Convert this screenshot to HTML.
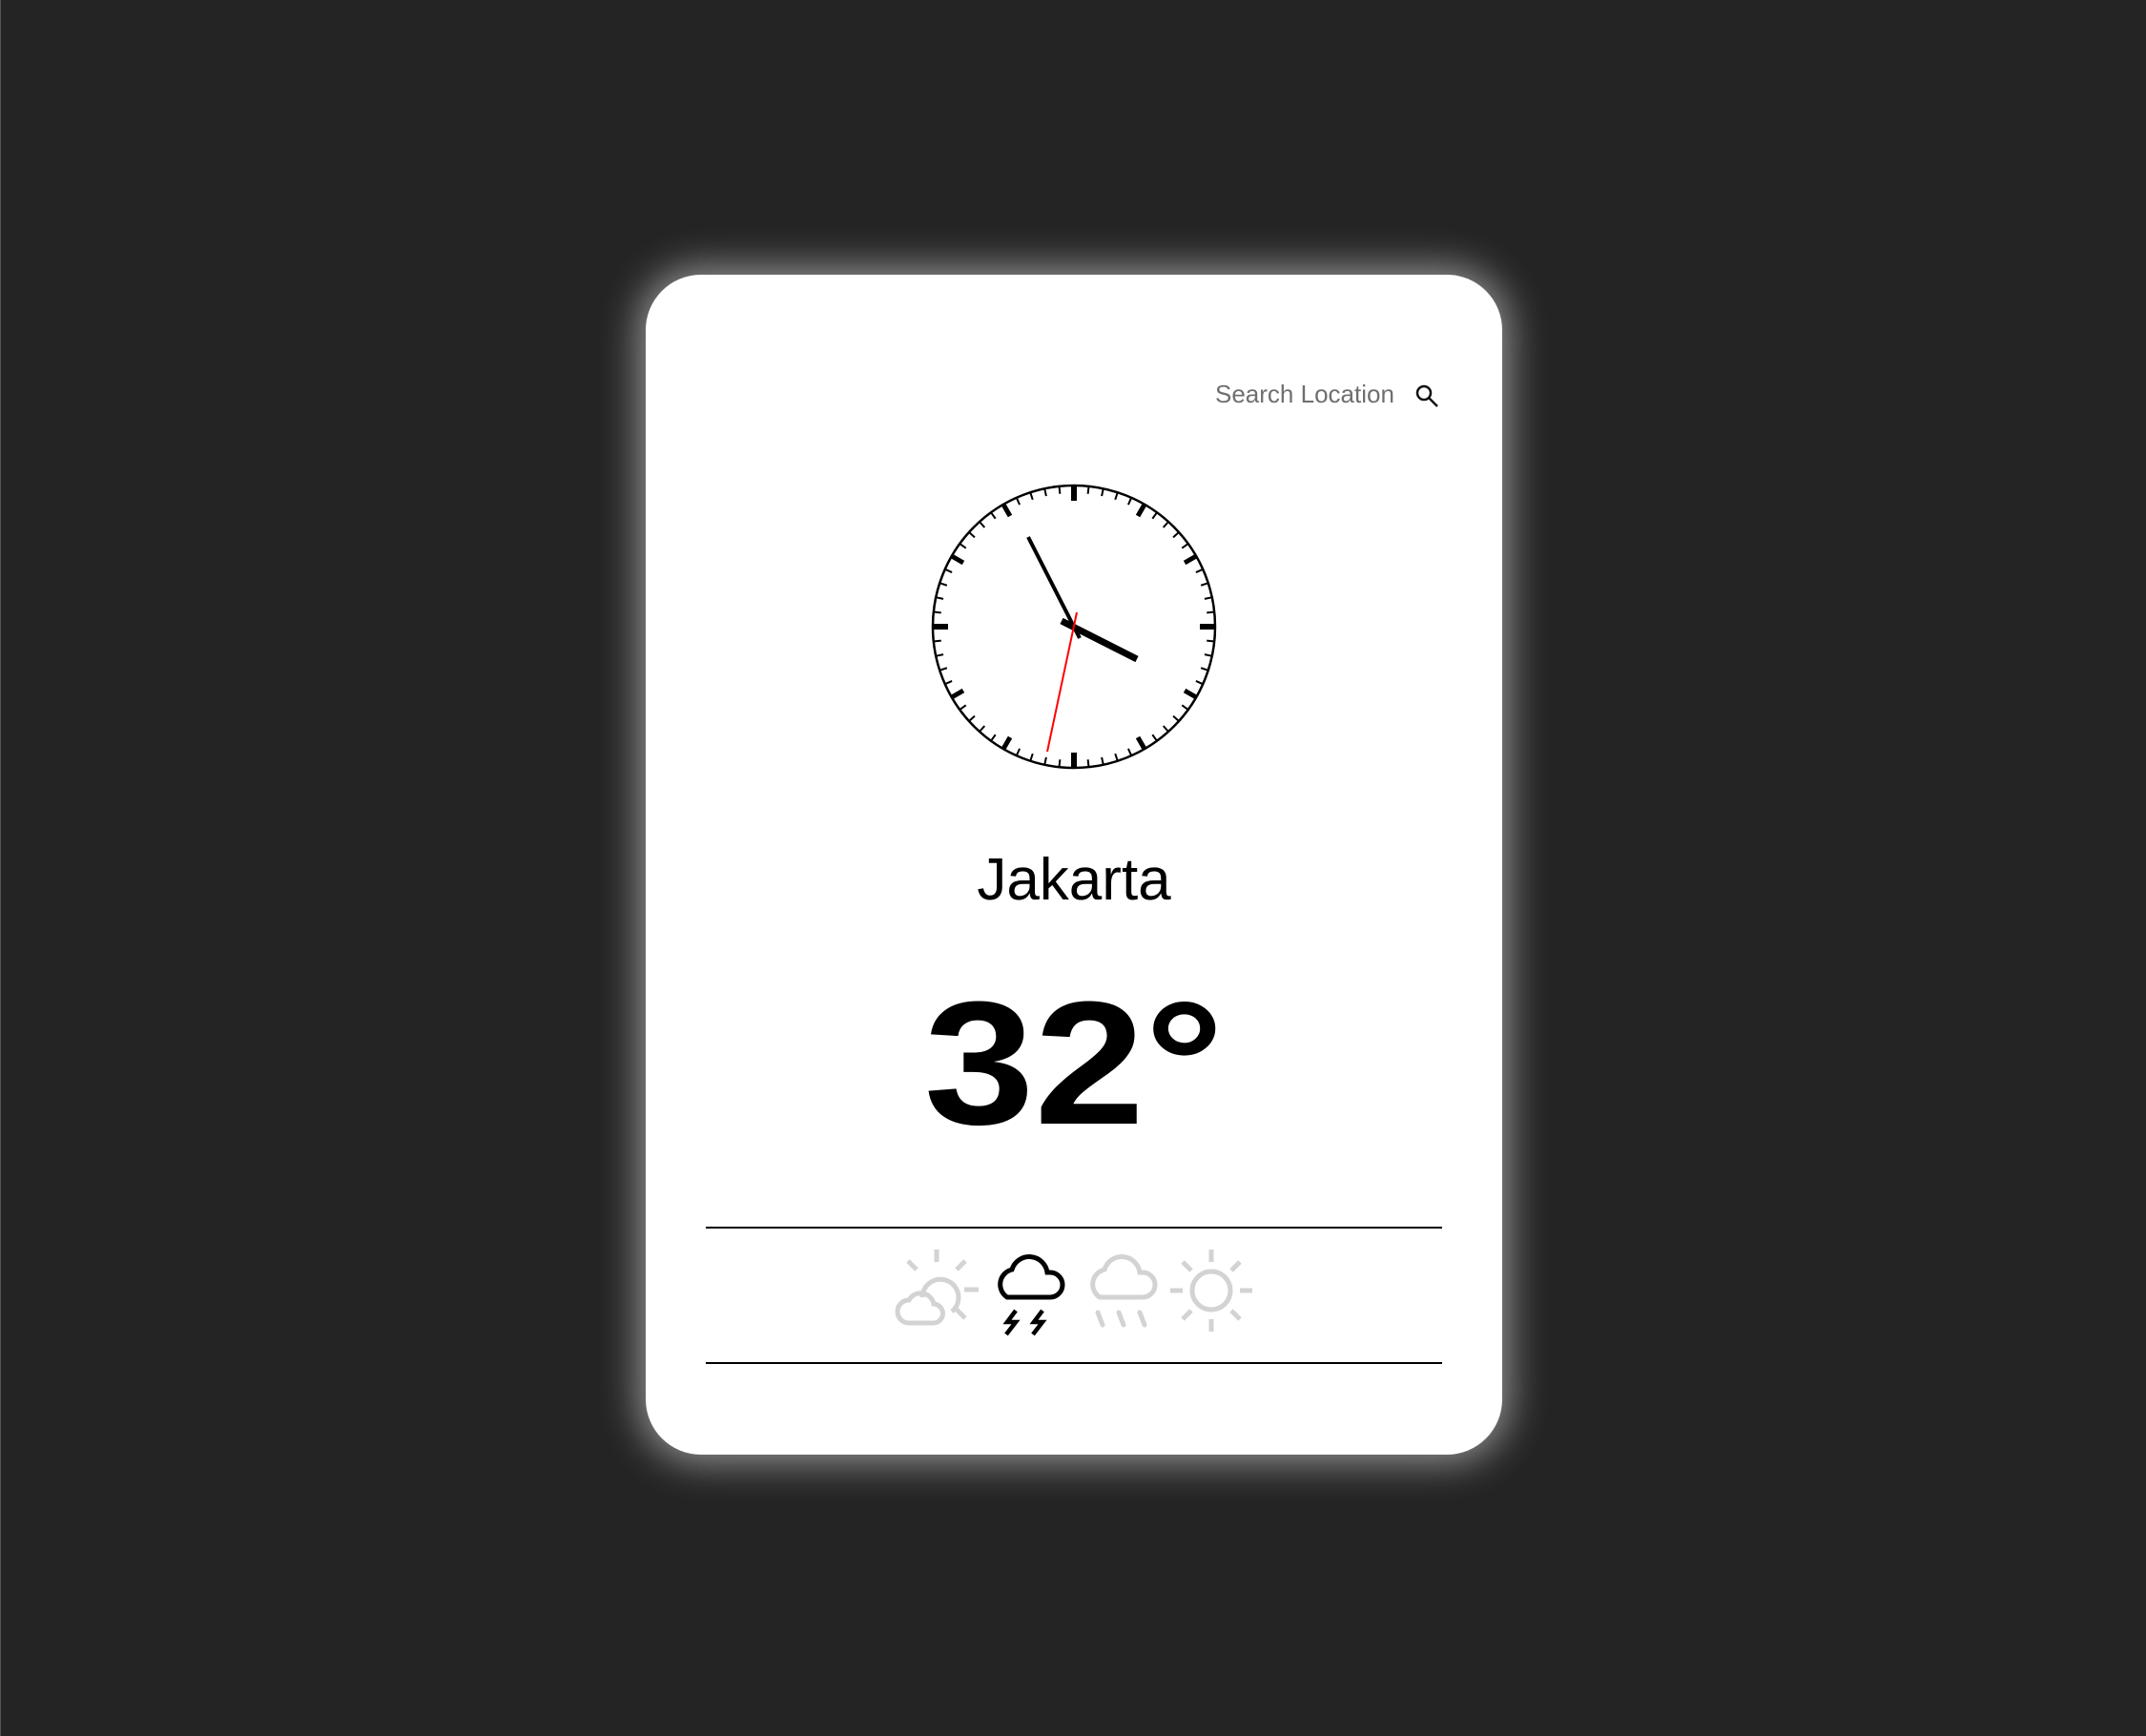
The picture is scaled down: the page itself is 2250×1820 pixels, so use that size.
<!DOCTYPE html>
<html><head><meta charset="utf-8"><style>
html,body{margin:0;padding:0;}
body{width:2250px;height:1820px;background:#242424;position:relative;overflow:hidden;font-family:"Liberation Sans",sans-serif;border-left:1px solid #555;box-sizing:border-box;}
.card{position:absolute;left:676px;top:288px;width:898px;height:1237px;background:#fff;border-radius:58px;box-shadow:0 0 40px 8px rgba(255,255,255,0.5);}
.t{position:absolute;white-space:nowrap;}
svg{position:absolute;left:0;top:0;}
</style></head><body>
<div class="card"></div>
<div class="t" style="left:1273px;top:398px;font-size:26px;color:#6f6f6f;">Search Location</div>
<div class="t" style="left:925px;top:887px;width:400px;text-align:center;font-size:62px;color:#000;">Jakarta</div>
<div class="t" style="left:925px;top:1022px;width:400px;text-align:center;font-size:184px;font-weight:bold;color:#000;line-height:1;transform:scaleX(1.13);transform-origin:center;">32°</div>
<svg width="2250" height="1820" viewBox="0 0 2250 1820">
<circle cx="1492" cy="412" r="7" fill="none" stroke="#111" stroke-width="2.5"/>
<line x1="1497" y1="417" x2="1506" y2="426" stroke="#111" stroke-width="2.5"/>
<circle cx="1125" cy="657" r="148" fill="#fff" stroke="#000" stroke-width="2.5"/>
<g id="ticks" transform="translate(1125 657)"></g>
<line x1="1112" y1="651" x2="1191" y2="691" stroke="#000" stroke-width="7"/>
<line x1="1131" y1="669" x2="1077" y2="563" stroke="#000" stroke-width="4"/>
<line x1="1128" y1="642" x2="1097" y2="788" stroke="#f00" stroke-width="2"/>
<line x1="739" y1="1287" x2="1511" y2="1287" stroke="#000" stroke-width="2"/>
<line x1="739" y1="1429" x2="1511" y2="1429" stroke="#000" stroke-width="2"/>
<g fill="none" stroke="#d3d3d3" stroke-width="5">
<path d="M966 1360 A19 19 0 1 1 997 1375"/>
<line x1="981" y1="1310" x2="981" y2="1323"/>
<line x1="1010" y1="1352" x2="1025" y2="1352"/>
<line x1="1002" y1="1331" x2="1011" y2="1322"/>
<line x1="960" y1="1331" x2="951" y2="1322"/>
<line x1="1002" y1="1373" x2="1011" y2="1382"/>
<path d="M952 1387 h25 a10 10 0 0 0 1 -20 a14 14 0 0 0 -26 -4 a12 12 0 0 0 0 24 z"/>
</g>
<path d="M1055 1360 h45 a13 13 0 0 0 0 -26 h-3 a19 19 0 0 0 -37 -3 a16 16 0 0 0 -5 29 z" fill="none" stroke="#000" stroke-width="5"/>
<path d="M1064 1374 l-9 12 h9 l-10 13 M1092 1374 l-9 12 h9 l-10 13" fill="none" stroke="#000" stroke-width="4.5"/>
<g fill="none" stroke="#d3d3d3" stroke-width="5" stroke-linecap="round">
<path d="M1152 1360 h45 a13 13 0 0 0 0 -26 h-3 a19 19 0 0 0 -37 -3 a16 16 0 0 0 -5 29 z"/>
<line x1="1150" y1="1376" x2="1155" y2="1389"/>
<line x1="1172" y1="1376" x2="1177" y2="1389"/>
<line x1="1194" y1="1376" x2="1199" y2="1389"/>
</g>
<g fill="none" stroke="#d3d3d3" stroke-width="5">
<circle cx="1269" cy="1353" r="20"/>
<line x1="1269" y1="1310" x2="1269" y2="1323"/>
<line x1="1269" y1="1383" x2="1269" y2="1396"/>
<line x1="1226" y1="1353" x2="1239" y2="1353"/>
<line x1="1299" y1="1353" x2="1312" y2="1353"/>
<line x1="1290" y1="1332" x2="1299" y2="1323"/>
<line x1="1248" y1="1332" x2="1239" y2="1323"/>
<line x1="1290" y1="1374" x2="1299" y2="1383"/>
<line x1="1248" y1="1374" x2="1239" y2="1383"/>
</g>
</svg>
<script>
var g=document.getElementById('ticks'),s='';
for(var i=0;i<60;i++){var a=i*6*Math.PI/180,big=i%5==0,r1=big?(i%15==0?132:134):140,r2=147,w=big?(i%15==0?6:5):2;
var x1=Math.sin(a)*r1,y1=-Math.cos(a)*r1,x2=Math.sin(a)*r2,y2=-Math.cos(a)*r2;
s+='<line x1="'+x1+'" y1="'+y1+'" x2="'+x2+'" y2="'+y2+'" stroke="#000" stroke-width="'+w+'"/>';}
g.innerHTML=s;
</script>
</body></html>
